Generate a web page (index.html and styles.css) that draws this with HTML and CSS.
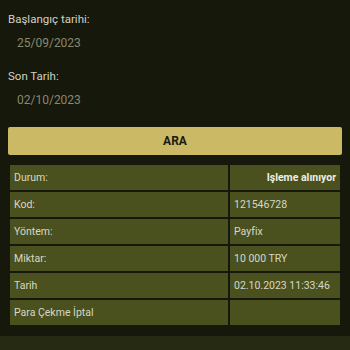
FILE: index.html
```html
<!DOCTYPE html>
<html lang="tr">
<head>
<meta charset="utf-8">
<link rel="stylesheet" href="styles.css">
</head>
<body>
<div class="page">
  <div class="field-label">Başlangıç tarihi:</div>
  <div class="field-value">25/09/2023</div>
  <div class="field-label second">Son Tarih:</div>
  <div class="field-value">02/10/2023</div>
  <button class="search-btn">ARA</button>
  <div class="result">
    <div class="cell">Durum:</div><div class="cell status">Işleme alınıyor</div>
    <div class="cell">Kod:</div><div class="cell">121546728</div>
    <div class="cell">Yöntem:</div><div class="cell">Payfix</div>
    <div class="cell">Miktar:</div><div class="cell">10 000 TRY</div>
    <div class="cell">Tarih</div><div class="cell">02.10.2023 11:33:46</div>
    <div class="cell">Para Çekme İptal</div><div class="cell"></div>
  </div>
</div>
<div class="bottom-band"></div>
</body>
</html>
```
FILE: styles.css
```css
html, body {
  margin: 0;
  padding: 0;
  background: #15180b;
  font-family: Roboto, "Liberation Sans", sans-serif;
  height: 350px;
  overflow: hidden;
}
.page {
  padding: 10px 8px 0 8px;
  display: flex;
  flex-direction: column;
}
.field-label {
  height: 18px;
  line-height: 18px;
  font-size: 11.5px;
  color: #d2d2c3;
}
.field-label.second {
  margin-top: 8px;
}
.field-value {
  height: 31px;
  line-height: 31px;
  padding-left: 9px;
  font-size: 12px;
  color: #88886f;
}
.search-btn {
  margin-top: 11px;
  height: 28px;
  border: none;
  border-radius: 2px;
  background: #cbb966;
  color: #1b1a0c;
  font-family: Roboto, "Liberation Sans", sans-serif;
  font-weight: bold;
  font-size: 12px;
  padding: 0;
}
.result {
  margin: 10px 2px 0 2px;
  display: grid;
  grid-template-columns: 218px 110px;
  grid-auto-rows: 25px;
  gap: 2px;
}
.cell {
  background: #4a511f;
  color: #d6d8c3;
  font-size: 10.5px;
  line-height: 26px;
  padding: 0 4px;
  white-space: nowrap;
}
.cell.status {
  text-align: right;
  font-weight: bold;
  color: #eeeee2;
}
.bottom-band {
  margin-top: 11px;
  height: 14px;
  background: #262a12;
}
```
